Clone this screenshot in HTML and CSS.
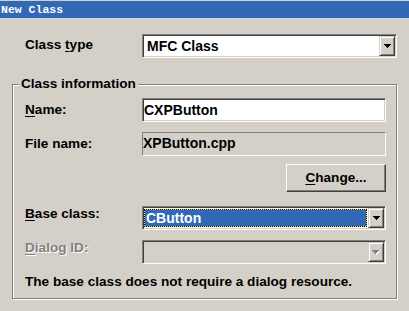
FILE: index.html
```html
<!DOCTYPE html>
<html>
<head>
<meta charset="utf-8">
<link rel="stylesheet" href="styles.css">
</head>
<body>
<div class="titlebar">New Class</div>
<div class="dialog">
  <div class="row top-row">
    <span class="label lift-1">Class <u>t</u>ype</span>
    <div class="combo wide">
      <span class="field">MFC Class</span>
      <span class="drop"><svg class="arrow" width="7" height="4" viewBox="0 0 7 4"><path d="M0 0h7v1h-1v1h-1v1h-1v1h-1v-1h-1v-1h-1v-1h-1z" fill="#000" shape-rendering="crispEdges"/></svg></span>
    </div>
  </div>
  <fieldset class="group">
    <legend>Class information</legend>
    <div class="row">
      <span class="label"><u>N</u>ame:</span>
      <div class="edit">CXPButton</div>
    </div>
    <div class="row gap10">
      <span class="label">File name:</span>
      <div class="static-box">XPButton.cpp</div>
    </div>
    <div class="row btn-row">
      <button class="btn"><u>C</u>hange...</button>
    </div>
    <div class="row gap14">
      <span class="label lift-4"><u>B</u>ase class:</span>
      <div class="combo">
        <span class="field sel"><span class="sel-text">CButton</span></span>
        <span class="drop"><svg class="arrow" width="7" height="4" viewBox="0 0 7 4"><path d="M0 0h7v1h-1v1h-1v1h-1v1h-1v-1h-1v-1h-1v-1h-1z" fill="#000" shape-rendering="crispEdges"/></svg></span>
      </div>
    </div>
    <div class="row gap10">
      <span class="label lift-4 disabled"><u>D</u>ialog ID:</span>
      <div class="combo off">
        <span class="field"></span>
        <span class="drop"><svg class="arrow" width="8" height="5" viewBox="0 0 8 5"><path d="M1 1h7v1h-1v1h-1v1h-1v1h-1v-1h-1v-1h-1v-1h-1z" fill="#fff" shape-rendering="crispEdges"/><path d="M0 0h7v1h-1v1h-1v1h-1v1h-1v-1h-1v-1h-1v-1h-1z" fill="#808080" shape-rendering="crispEdges"/></svg></span>
      </div>
    </div>
    <p class="note">The base class does not require a dialog resource.</p>
  </fieldset>
</div>
</body>
</html>
```
FILE: styles.css
```css
html, body {
  margin: 0;
  padding: 0;
}
body {
  width: 409px;
  height: 311px;
  overflow: hidden;
  background: #d4d0c8;
  color: #000;
  font: bold 13.6px/16px "Liberation Sans", Arial, sans-serif;
}
u {
  text-decoration: underline;
  text-decoration-thickness: 1px;
  text-underline-offset: 2px;
}
.titlebar {
  margin-top: 1px;
  height: 17px;
  box-sizing: border-box;
  padding: 1px 0 0 1px;
  background: #3169b6;
  color: #fff;
  font: bold 11.5px/16px "Liberation Mono", "Courier New", monospace;
}
.dialog {
  padding-left: 12px;
}
.row {
  display: flex;
  align-items: center;
  height: 24px;
}
.top-row {
  margin-top: 16px;
  padding-left: 13px;
}
.label {
  width: 117px;
  flex: none;
  white-space: nowrap;
}
.lift-1 {
  margin-bottom: 3px;
}
.lift-4 {
  margin-bottom: 8px;
}
.disabled {
  color: #808080;
  text-shadow: 1px 1px 0 #fff;
}
.combo, .edit {
  box-sizing: border-box;
  height: 24px;
  width: 244px;
  border: 1px solid;
  border-color: #808080 #fff #fff #808080;
  box-shadow: inset 1px 1px 0 #404040, inset -1px -1px 0 #d4d0c8;
  background: #fff;
}
.combo {
  display: flex;
  padding: 1px;
}
.combo.wide {
  width: 255px;
}
.combo.off {
  background: #d4d0c8;
}
.field {
  flex: 1;
  display: flex;
  align-items: center;
  padding-left: 3px;
  font-size: 14px;
}
.field.sel {
  margin: 1px 1px 1px 0;
  padding-left: 0;
  border: 1px dotted #000;
  background: linear-gradient(#3169b6, #3169b6) padding-box, #e8dc80 border-box;
}
.sel-text {
  color: #fff;
  padding-left: 1px;
}
.drop {
  flex: none;
  width: 16px;
  box-sizing: border-box;
  display: flex;
  align-items: center;
  justify-content: center;
  background: #d4d0c8;
  border: 1px solid;
  border-color: #d4d0c8 #404040 #404040 #d4d0c8;
  box-shadow: inset 1px 1px 0 #fff, inset -1px -1px 0 #808080;
}
.arrow {
  display: block;
}
.edit {
  padding: 2px 0 0 1px;
  line-height: 18px;
  font-size: 14px;
}
.static-box {
  box-sizing: border-box;
  height: 24px;
  width: 244px;
  border: 1px solid;
  border-color: #808080 #fff #fff #808080;
  padding: 1px 0 0 0;
  line-height: 18px;
  font-size: 14px;
}
.group {
  margin: 18px 0 0 0;
  width: 385px;
  box-sizing: border-box;
  border: 1px solid #808080;
  box-shadow: 1px 1px 0 #fff, inset 1px 1px 0 #fff;
  padding: 6px 10px 8px 12px;
  min-width: 0;
}
.group legend {
  margin-left: -6px;
  padding: 0 2px;
  line-height: 16px;
  background: #d4d0c8;
}
.gap10 {
  margin-top: 10px;
}
.gap14 {
  margin-top: 14px;
}
.btn-row {
  margin-top: 8px;
  height: 28px;
  justify-content: flex-end;
}
.btn {
  width: 100px;
  height: 28px;
  box-sizing: border-box;
  margin: 0;
  padding: 0;
  font: inherit;
  color: #000;
  background: #d4d0c8;
  border: 1px solid;
  border-color: #fff #404040 #404040 #fff;
  box-shadow: inset -1px -1px 0 #808080;
  border-radius: 0;
}
.note {
  margin: 10px 0 0 0;
  line-height: 16px;
  white-space: nowrap;
}
```
